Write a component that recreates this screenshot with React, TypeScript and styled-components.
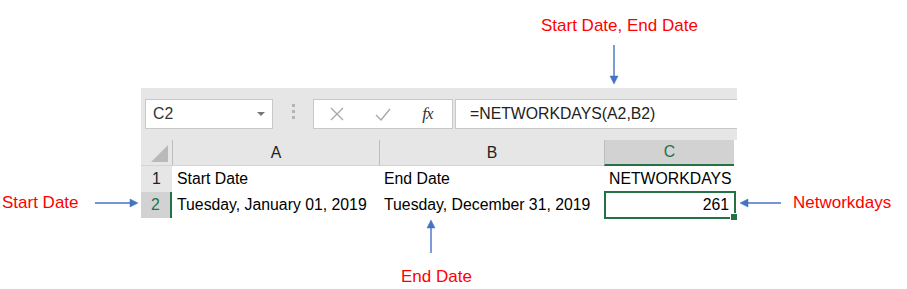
import React from 'react';
import styled, {createGlobalStyle} from 'styled-components';

const GlobalStyle = createGlobalStyle`
  html, body {
    margin: 0;
    padding: 0;
    background: #ffffff;
  }
  body {
    font-family: 'Liberation Sans', Arial, sans-serif;
  }
`;

const BLUE = '#4472c4';
const GREEN = '#217346';

const Page = styled.div`
  display: grid;
  grid-template-columns: 141px 596px 1fr;
  grid-template-rows: 88px auto 1fr;
  width: 907px;
  height: 289px;
  overflow: hidden;
`;

const Label = styled.span`
  display: block;
  color: #ff0000;
  font-size: 17px;
  line-height: 20px;
  white-space: nowrap;
`;

const TopCallout = styled.div`
  grid-column: 2;
  grid-row: 1;
  display: flex;
  flex-direction: column;
  align-items: flex-start;
  padding: 16px 0 0 400px;
`;

const SideCallout = styled.div<{$side: 'left' | 'right'}>`
  grid-column: ${(p) => (p.$side === 'left' ? 1 : 3)};
  grid-row: 2;
  align-self: end;
  display: flex;
  align-items: center;
  margin-bottom: 5px;
  padding-left: ${(p) => (p.$side === 'left' ? '2px' : '3px')};
  gap: ${(p) => (p.$side === 'left' ? '16px' : '12px')};
`;

const BottomCallout = styled.div`
  grid-column: 2;
  grid-row: 3;
  display: flex;
  flex-direction: column;
  align-items: flex-start;
  padding: 2px 0 0 260px;
`;

const Spacer = styled.div<{$h: number}>`
  height: ${(p) => p.$h}px;
`;

const ArrowSvg = styled.svg<{$offset?: number}>`
  display: block;
  margin-left: ${(p) => p.$offset ?? 0}px;
`;

function Arrow({dir, length, offset}: {dir: 'up' | 'down' | 'left' | 'right'; length: number; offset?: number}) {
  const vertical = dir === 'up' || dir === 'down';
  const w = vertical ? 10 : length;
  const h = vertical ? length : 10;
  let line;
  let head;
  if (dir === 'down') {
    line = <line x1={5} y1={0} x2={5} y2={length - 7} />;
    head = `1,${length - 8} 9,${length - 8} 5,${length}`;
  } else if (dir === 'up') {
    line = <line x1={5} y1={7} x2={5} y2={length} />;
    head = `1,8 9,8 5,0`;
  } else if (dir === 'right') {
    line = <line x1={0} y1={5} x2={length - 7} y2={5} />;
    head = `${length - 8},1 ${length - 8},9 ${length},5`;
  } else {
    line = <line x1={7} y1={5} x2={length} y2={5} />;
    head = `8,1 8,9 0,5`;
  }
  return (
    <ArrowSvg $offset={offset} width={w} height={h} viewBox={`0 0 ${w} ${h}`}>
      <g stroke={BLUE} strokeWidth={1.4} fill={BLUE}>
        {line}
        <polygon points={head} strokeWidth={0.5} />
      </g>
    </ArrowSvg>
  );
}

const Sheet = styled.div`
  grid-column: 2;
  grid-row: 2;
  display: flex;
  flex-direction: column;
  width: 596px;
  font-size: 15.8px;
`;

const Toolbar = styled.div`
  display: flex;
  align-items: flex-start;
  height: 52px;
  padding: 11px 0 0 4px;
  box-sizing: border-box;
  background: #e6e6e6;
`;

const Box = styled.div<{$width?: number; $gap?: number}>`
  display: flex;
  align-items: center;
  box-sizing: border-box;
  height: 30px;
  ${(p) => (p.$width ? `width: ${p.$width}px;` : 'flex: 1;')}
  margin-left: ${(p) => p.$gap ?? 0}px;
  background: #ffffff;
  border: 1px solid #c8c8c8;
  border-right-width: ${(p) => (p.$width ? 1 : 0)}px;
  color: #333;
`;

const NameText = styled.span`
  flex: 1;
  padding-left: 7px;
`;

const Caret = styled.span`
  width: 0;
  height: 0;
  margin-right: 7px;
  border-left: 4px solid transparent;
  border-right: 4px solid transparent;
  border-top: 4px solid #777;
`;

const Grip = styled.div`
  display: flex;
  flex-direction: column;
  gap: 3px;
  margin: 5px 0 0 19px;
  span {
    width: 3px;
    height: 3px;
    background: #b4b4b4;
  }
`;

const IconSlot = styled.span`
  display: flex;
  justify-content: center;
  align-items: center;
  width: 46px;
`;

const FxText = styled.span`
  font-family: 'Liberation Serif', 'Times New Roman', serif;
  font-style: italic;
  font-size: 17px;
  color: #333;
  letter-spacing: -1px;
  margin-right: 3px;
`;

const FormulaText = styled.span`
  padding-left: 14px;
  color: #222;
`;

const Grid = styled.div`
  display: grid;
  grid-template-columns: 31px 207px 225px 130px;
  grid-auto-rows: 26px;
`;

const ColHead = styled.div<{$active?: boolean}>`
  display: flex;
  align-items: center;
  justify-content: center;
  box-sizing: border-box;
  background: ${(p) => (p.$active ? '#d2d2d2' : '#e6e6e6')};
  color: ${(p) => (p.$active ? GREEN : '#222')};
  border-left: 1px solid #bdbdbd;
  border-bottom: ${(p) => (p.$active ? `2px solid ${GREEN}` : '1px solid #d4d4d4')};
`;

const Corner = styled.div`
  display: flex;
  align-items: flex-end;
  justify-content: flex-end;
  padding: 0 4px 3px 0;
  background: #e6e6e6;
  border-bottom: 1px solid #d4d4d4;
  box-sizing: border-box;
`;

const Triangle = styled.span`
  width: 0;
  height: 0;
  border-left: 17px solid transparent;
  border-bottom: 17px solid #b9b9b9;
`;

const RowHead = styled.div<{$active?: boolean}>`
  display: flex;
  align-items: center;
  justify-content: center;
  box-sizing: border-box;
  background: ${(p) => (p.$active ? '#d2d2d2' : '#e6e6e6')};
  color: ${(p) => (p.$active ? GREEN : '#222')};
  border-right: ${(p) => (p.$active ? `2px solid ${GREEN}` : '0')};
`;

const Cell = styled.div<{$align?: 'left' | 'right'; $selected?: boolean}>`
  position: relative;
  display: flex;
  align-items: center;
  justify-content: ${(p) => (p.$align === 'right' ? 'flex-end' : 'flex-start')};
  padding: 0 5px;
  white-space: nowrap;
  color: #000;
  ${(p) =>
    p.$selected &&
    `
    &::after {
      content: '';
      position: absolute;
      left: 0;
      top: -1px;
      right: -2px;
      bottom: -1px;
      border: 2px solid ${GREEN};
    }
  `}
`;

const FillHandle = styled.span`
  position: absolute;
  right: -4px;
  bottom: -3px;
  width: 6px;
  height: 6px;
  background: ${GREEN};
  border: 1px solid #fff;
  z-index: 1;
`;

export default function App() {
  return (
    <>
      <GlobalStyle />
      <Page>
        <TopCallout>
          <Label>Start Date, End Date</Label>
          <Spacer $h={9} />
          <Arrow dir="down" length={39} offset={68} />
        </TopCallout>

        <SideCallout $side="left">
          <Label>Start Date</Label>
          <Arrow dir="right" length={43} />
        </SideCallout>

        <Sheet>
          <Toolbar>
            <Box $width={128}>
              <NameText>C2</NameText>
              <Caret />
            </Box>
            <Grip>
              <span />
              <span />
              <span />
            </Grip>
            <Box $width={140} $gap={18}>
              <IconSlot>
                <svg width="14" height="14" viewBox="0 0 14 14">
                  <path d="M1 1 L13 13 M13 1 L1 13" stroke="#a8a8a8" strokeWidth="1.3" />
                </svg>
              </IconSlot>
              <IconSlot>
                <svg width="16" height="13" viewBox="0 0 16 13">
                  <path d="M1 7 L6 12 L15 1" stroke="#a8a8a8" strokeWidth="1.4" fill="none" />
                </svg>
              </IconSlot>
              <IconSlot>
                <FxText>fx</FxText>
              </IconSlot>
            </Box>
            <Box $gap={2}>
              <FormulaText>=NETWORKDAYS(A2,B2)</FormulaText>
            </Box>
          </Toolbar>

          <Grid>
            <Corner>
              <Triangle />
            </Corner>
            <ColHead>A</ColHead>
            <ColHead>B</ColHead>
            <ColHead $active>C</ColHead>

            <RowHead>1</RowHead>
            <Cell>Start Date</Cell>
            <Cell>End Date</Cell>
            <Cell>NETWORKDAYS</Cell>

            <RowHead $active>2</RowHead>
            <Cell>Tuesday, January 01, 2019</Cell>
            <Cell>Tuesday, December 31, 2019</Cell>
            <Cell $align="right" $selected>
              261
              <FillHandle />
            </Cell>
          </Grid>
        </Sheet>

        <SideCallout $side="right">
          <Arrow dir="left" length={41} />
          <Label>Networkdays</Label>
        </SideCallout>

        <BottomCallout>
          <Arrow dir="up" length={33} offset={25} />
          <Spacer $h={14} />
          <Label>End Date</Label>
        </BottomCallout>
      </Page>
    </>
  );
}
